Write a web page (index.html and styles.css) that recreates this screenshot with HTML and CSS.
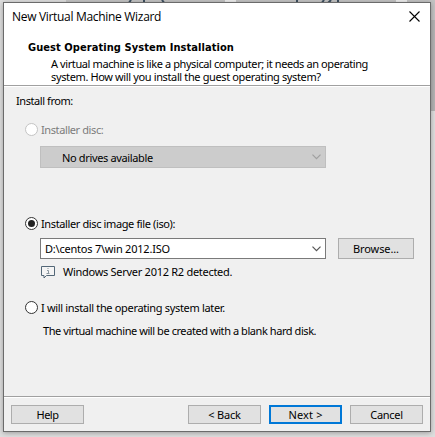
FILE: index.html
```html
<!DOCTYPE html>
<html lang="en">
<head>
<meta charset="utf-8">
<title>New Virtual Machine Wizard</title>
<link rel="stylesheet" href="styles.css">
</head>
<body>
<svg class="backdrop" width="435" height="437" shape-rendering="crispEdges">
  <rect width="435" height="437" fill="#dedede"/>
  <rect x="66" width="369" height="110" fill="#c3c3c3"/>
  <rect x="225" width="11" height="4" fill="#ececec"/>
  <rect x="396" width="11" height="4" fill="#ececec"/>
  <rect x="431" y="20" width="4" height="91" fill="#b4b4b4"/>
  <g stroke="#3d4f5f" stroke-width="2" shape-rendering="auto" fill="none"><path d="M131 0l-3 4M144 0v4M162 0l3 4M297 0v4M324 0l-3 4M331 0l-4 4M338 0v4"/></g>
</svg>
<main class="window">
  <header class="head">
    <div class="titlebar">
      <span class="title">New Virtual Machine Wizard</span>
      <svg class="close" width="11" height="11" viewBox="0 0 11 11"><path d="M.5.5l10 10M10.500.5l-10 10" stroke="#000" stroke-width="1.1"/></svg>
    </div>
    <h1><span class="t-head">Guest Operating System Installation</span></h1>
    <p class="t-desc1">A virtual machine is like a physical computer; it needs an operating</p>
    <p class="t-desc2">system. How will you install the guest operating system?</p>
  </header>
  <section class="content">
    <div class="from"><span class="t-from">Install from:</span></div>
    <div class="option disabled"><i class="radio"></i><span class="t-disc">Installer disc:</span></div>
    <div class="select off"><span class="t-none">No drives available</span><svg width="9" height="6" viewBox="0 0 9 6"><path d="M.5.7l4 4 4-4" fill="none" stroke="#a0a0a0" stroke-width="1.2"/></svg></div>
    <div class="option iso"><i class="radio on"></i><span class="t-iso">Installer disc image file (iso):</span></div>
    <div class="filerow">
      <div class="select"><span class="t-path">D:\centos 7\win 2012.ISO</span><svg width="9" height="6" viewBox="0 0 9 6"><path d="M.5.7l4 4 4-4" fill="none" stroke="#555" stroke-width="1.2"/></svg></div>
      <div class="button browse"><span class="t-browse">Browse...</span></div>
    </div>
    <div class="detected">
      <svg width="14" height="13" viewBox="0 0 14 13"><path d="M.5.5h13v9H5.500L3 12V9.500H.5z" fill="#f4f4f4" stroke="#536777"/><path d="M6 4.500h1.500v3M5.500 7.500h3M6.500 2.500h1" stroke="#8b969e" fill="none"/></svg>
      <span class="t-det">Windows Server 2012 R2 detected.</span>
    </div>
    <div class="option later"><i class="radio"></i><span class="t-later">I will install the operating system later.</span></div>
    <div class="note"><span class="t-note">The virtual machine will be created with a blank hard disk.</span></div>
  </section>
  <footer class="foot">
    <div class="button"><span class="t-help">Help</span></div>
    <div class="button back"><span class="t-back">&lt; Back</span></div>
    <div class="button next"><span class="t-next">Next &gt;</span></div>
    <div class="button"><span class="t-cancel">Cancel</span></div>
  </footer>
</main>
</body>
</html>
```
FILE: styles.css
```css
* { box-sizing: border-box; }
body { margin: 0; width: 435px; height: 437px; overflow: hidden; font: 11px/13px "Noto Sans", sans-serif; color: #000; }
span, p { white-space: nowrap; }
.backdrop { position: absolute; left: 0; top: 0; z-index: -1; }
.window { width: 428px; height: 430px; margin: 2px 0 0 3px; border: 1px solid #6b6b6b; background: #f0f0f0; display: flex; flex-direction: column; box-shadow: 0 1px 5px rgba(0,0,0,.3); }
.head { height: 84px; flex: none; background: #fff; border-bottom: 1px solid #fff; box-shadow: inset 0 -1px #a0a0a0; }
.titlebar { height: 37px; display: flex; justify-content: space-between; padding: 6px 10px 0 8px; font: 12px/16px "Open Sans", sans-serif; }
.close { margin-top: 2px; }
h1 { margin: 0 0 0 24px; padding-top: 1px; font: bold 11px/14px "DejaVu Sans Condensed", "DejaVu Sans", sans-serif; font-stretch: condensed; height: 17px; }
p { margin: 0 0 0 47px; height: 13px; }
.content { height: 309px; flex: none; }
.from { padding: 7px 0 0 12px; height: 35px; }
.option { display: flex; align-items: center; gap: 3px; height: 15px; margin-left: 21px; }
.disabled { color: #7c7c7c; }
.radio { width: 13px; height: 13px; border: 1px solid #333; border-radius: 50%; background: #fff; display: flex; }
.disabled .radio { border-color: #c4c4c4; }
.on::after { content: ""; width: 7px; height: 7px; margin: 2px; border-radius: 50%; background: #222; }
.select { width: 286px; height: 21px; border: 1px solid #7a7a7a; background: #fff; display: flex; align-items: center; justify-content: space-between; padding: 0 4px; }
.off { height: 22px; margin: 9px 0 0 36px; padding-left: 21px; background: #ccc; border-color: #bfbfbf; }
.iso { margin-top: 48px; }
.filerow { display: flex; gap: 12px; margin: 7px 0 0 36px; }
.button { width: 73px; height: 19px; border: 1px solid #adadad; background: #e1e1e1; display: flex; align-items: center; justify-content: center; }
.browse { width: 76px; height: 21px; }
.detected { display: flex; gap: 8px; padding-top: 6px; margin: 0 0 0 37px; height: 26px; }
.detected svg { margin-top: 1px; }
.later { margin-top: 15px; }
.note { margin: 9px 0 0 39px; }
.foot { flex: 1; border-top: 1px solid #a0a0a0; box-shadow: inset 0 1px #fff; display: flex; padding: 8px 7px 0; gap: 8px; }
.back { margin-left: auto; }
.next { border: 2px solid #0078d7; }
.title { letter-spacing: -.31px; }
.t-head { letter-spacing: .07px; }
.t-desc1 { letter-spacing: -.4px; }
.t-desc2 { letter-spacing: -.37px; }
.t-from { letter-spacing: -.43px; }
.t-disc { letter-spacing: -.4px; }
.t-none { letter-spacing: -.35px; }
.t-iso { letter-spacing: -.38px; }
.t-path { letter-spacing: -.22px; }
.t-det { letter-spacing: -.28px; }
.t-later { letter-spacing: -.33px; }
.t-note { letter-spacing: -.43px; }
.t-browse { letter-spacing: -.1px; }
.t-help { letter-spacing: -.5px; }
.t-back { letter-spacing: -.2px; }
.t-next { letter-spacing: .15px; }
.t-cancel { letter-spacing: -.3px; }
```
